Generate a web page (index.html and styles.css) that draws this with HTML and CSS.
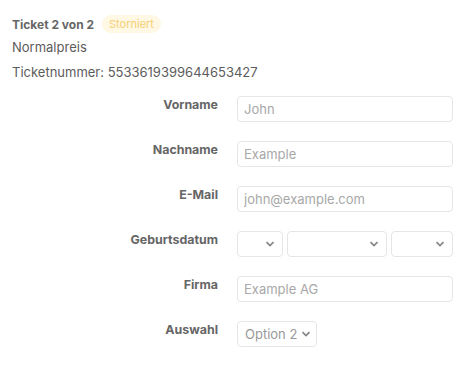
FILE: index.html
```html
<!DOCTYPE html>
<html lang="de">
  <head>
    <meta charset="utf-8" />
    <title>Ticket</title>
    <link rel="stylesheet" href="styles.css">
  </head>
  <body>
    <div class="ticket">
      <div class="ticket-head">
        <span class="ticket-title">Ticket 2 von 2</span>
        <span class="badge">Storniert</span>
      </div>
      <div class="ticket-line">Normalpreis</div>
      <div class="ticket-line">Ticketnummer: 5533619399644653427</div>

      <form class="form">
        <label class="form-label" for="vorname">Vorname</label>
        <input id="vorname" class="field" type="text" placeholder="John" />

        <label class="form-label" for="nachname">Nachname</label>
        <input id="nachname" class="field" type="text" placeholder="Example" />

        <label class="form-label" for="email">E-Mail</label>
        <input id="email" class="field" type="email" placeholder="john@example.com" />

        <label class="form-label">Geburtsdatum</label>
        <div class="date-row">
          <select class="field select day"><option></option></select>
          <select class="field select month"><option></option></select>
          <select class="field select year"><option></option></select>
        </div>

        <label class="form-label" for="firma">Firma</label>
        <input id="firma" class="field" type="text" placeholder="Example AG" />

        <label class="form-label" for="auswahl">Auswahl</label>
        <div>
          <select id="auswahl" class="field select choice">
            <option>Option 1</option>
            <option selected>Option 2</option>
          </select>
        </div>
      </form>
    </div>
  </body>
</html>
```

FILE: styles.css
```css
body {
  margin: 0;
  background: #ffffff;
  font-family: Inter, "Noto Sans", sans-serif;
  color: #555555;
}

.ticket {
  padding: 13px 12px;
}

.ticket-head {
  display: flex;
  align-items: center;
  gap: 8px;
  height: 22px;
}

.ticket-title {
  font-size: 12px;
  font-weight: 700;
  color: #666666;
}

.badge {
  font-size: 11px;
  color: #f8cf74;
  background: #fff8e4;
  padding: 2px 7px;
  border-radius: 9px;
  line-height: 14px;
}

.ticket-line {
  font-size: 13px;
  line-height: 25px;
  color: #5c5c5c;
}

.form {
  display: grid;
  grid-template-columns: 206px 216px;
  column-gap: 19px;
  row-gap: 19px;
  margin-top: 11px;
}

.form-label {
  font-size: 12.4px;
  font-weight: 700;
  color: #666666;
  text-align: right;
  line-height: 17px;
}

.field {
  box-sizing: border-box;
  height: 26px;
  width: 100%;
  border: 1px solid #e6e6e6;
  border-radius: 4px;
  padding: 0 6px;
  font-family: Inter, "Noto Sans", sans-serif;
  font-size: 13px;
  color: #999999;
  background: #ffffff;
  outline: none;
}

.field::placeholder {
  color: #a8a8a8;
}

.date-row {
  display: flex;
  gap: 4px;
}

.select {
  appearance: none;
  background-image: url("data:image/svg+xml;utf8,<svg xmlns='http://www.w3.org/2000/svg' width='10' height='6' viewBox='0 0 10 6'><path d='M1.5 1.2 L5 4.6 L8.5 1.2' fill='none' stroke='%23888' stroke-width='1.8'/></svg>");
  background-repeat: no-repeat;
  background-position: right 7px center;
  background-size: 10px 6px;
  padding-right: 18px;
}

.day { width: 46px; }
.month { width: 100px; }
.year { width: 62px; }
.choice {
  width: 80px;
  padding-left: 7px;
  padding-right: 12px;
  background-position: right 5px center;
}
```
